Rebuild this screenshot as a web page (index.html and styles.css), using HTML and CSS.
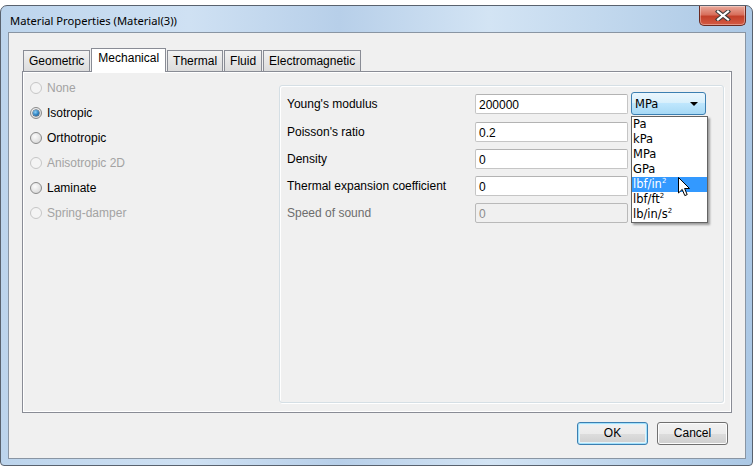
FILE: index.html
```html
<!DOCTYPE html>
<html>
<head>
  <link rel="stylesheet" href="styles.css">
</head>
<body>
<div class="window">
  <div class="titlebar">
    <span class="title">Material Properties (Material(3))</span>
    <div class="close-btn">
      <svg width="16" height="11" viewBox="0 0 16 11">
        <path d="M3 1.5 L13 9.5 M13 1.5 L3 9.5" stroke="#3b3b3b" stroke-width="4.2" stroke-linecap="square"/>
        <path d="M3 1.5 L13 9.5 M13 1.5 L3 9.5" stroke="#ffffff" stroke-width="2.2" stroke-linecap="square"/>
      </svg>
    </div>
  </div>

  <div class="client">
    <!-- tab strip -->
    <div class="tabs">
      <div class="tab">Geometric</div>
      <div class="tab selected">Mechanical</div>
      <div class="tab">Thermal</div>
      <div class="tab">Fluid</div>
      <div class="tab">Electromagnetic</div>
    </div>

    <div class="tab-panel">
      <div class="radio-list">
        <div class="radio disabled"><span class="circle"></span>None</div>
        <div class="radio checked"><span class="circle"></span>Isotropic</div>
        <div class="radio"><span class="circle"></span>Orthotropic</div>
        <div class="radio disabled"><span class="circle"></span>Anisotropic 2D</div>
        <div class="radio"><span class="circle"></span>Laminate</div>
        <div class="radio disabled"><span class="circle"></span>Spring-damper</div>
      </div>

      <div class="group-box">
        <div class="prop-grid">
          <div class="prop-label">Young's modulus</div>
          <div class="field">200000</div>
          <div class="combo-wrap">
            <div class="combo">MPa<span class="arrow"></span></div>
            <div class="combo-list">
              <div class="item">Pa</div>
              <div class="item">kPa</div>
              <div class="item">MPa</div>
              <div class="item">GPa</div>
              <div class="item active">lbf/in<sup>2</sup></div>
              <div class="item">lbf/ft<sup>2</sup></div>
              <div class="item">lb/in/s<sup>2</sup></div>
              <svg class="cursor" width="13" height="20" viewBox="0 0 13 20">
                <path d="M0.5 0.5 L0.5 16 L4.2 12.4 L6.8 18.6 L9.2 17.6 L6.6 11.5 L11.5 11.5 Z" fill="#fff" stroke="#000" stroke-width="1" stroke-linejoin="miter"/>
              </svg>
            </div>
          </div>

          <div class="prop-label">Poisson's ratio</div>
          <div class="field">0.2</div>
          <div></div>

          <div class="prop-label">Density</div>
          <div class="field">0</div>
          <div></div>

          <div class="prop-label">Thermal expansion coefficient</div>
          <div class="field">0</div>
          <div></div>

          <div class="prop-label disabled">Speed of sound</div>
          <div class="field disabled">0</div>
          <div></div>
        </div>
      </div>
    </div>

    <div class="buttons">
      <div class="btn default">OK</div>
      <div class="btn">Cancel</div>
    </div>
  </div>
</div>
</body>
</html>
```

FILE: styles.css
```css
/* reset */
* {
  margin: 0;
  padding: 0;
  box-sizing: border-box;
}

body {
  width: 756px;
  height: 467px;
  background: #ffffff;
  font-family: "Liberation Sans", Arial, sans-serif;
  font-size: 12px;
  color: #000;
  overflow: hidden;
}

/* Outer window frame (Aero glass look) */
.window {
  margin-top: 5px;
  width: 753px;
  height: 461px;
  border: 1px solid #59626e;
  border-radius: 7px 7px 4px 4px;
  background: linear-gradient(to right, #bcd4ec 0%, #cfe1f3 25%, #b7cfe9 45%, #d3e4f4 65%, #abc8e5 100%);
  padding: 0 6px 6px 7px;
  display: flex;
  flex-direction: column;
}

.titlebar {
  height: 26px;
  display: flex;
  align-items: flex-start;
}

.title {
  font-family: "Noto Sans", "Open Sans", sans-serif;
  font-size: 11.2px;
  padding: 7px 0 0 2px;
  color: #000;
}

.close-btn {
  margin-left: auto;
  width: 47px;
  height: 20px;
  border: 1px solid #6b2a20;
  border-top: none;
  border-radius: 0 0 5px 5px;
  background: linear-gradient(to bottom, #e9a99b 0%, #d8705d 45%, #c3402a 55%, #d45a43 100%);
  box-shadow: inset 0 0 0 1px rgba(255, 255, 255, 0.35);
  display: flex;
  align-items: center;
  justify-content: center;
}

/* Client area of the dialog */
.client {
  height: 427px;
  border: 1px solid #8995a3;
  background: #f0f0f0;
  padding: 15px 13px 13px 13px;
  display: flex;
  flex-direction: column;
}

/* Tabs */
.tabs {
  display: flex;
  align-items: flex-end;
  height: 23px;
  padding-left: 1px;
  position: relative;
  z-index: 1;
}

.tab {
  height: 21px;
  padding: 3px 5px 0 5px;
  border: 1px solid #898c95;
  border-bottom: none;
  background: linear-gradient(to bottom, #f2f2f2 0%, #e6e6e6 50%, #dcdcdc 100%);
  margin-right: 1px;
  white-space: nowrap;
}

.tab.selected {
  height: 24px;
  padding: 2px 6px 0 6px;
  background: #ffffff;
  margin-bottom: -1px;
}

.tab-panel {
  height: 342px;
  border: 1px solid #898c95;
  box-shadow: inset 0 0 0 1px #ffffff;
  display: flex;
  padding: 0 7px 0 2px;
}

/* Radio list on the left */
.radio-list {
  width: 254px;
  padding-top: 3px;
}

.radio {
  height: 25px;
  display: flex;
  align-items: center;
  padding-left: 5px;
}

.radio .circle {
  width: 12px;
  height: 12px;
  border-radius: 50%;
  border: 1px solid #8a8a8a;
  background: radial-gradient(circle at 40% 35%, #fbfbfb 0%, #e6e6e6 50%, #cfcfcf 100%);
  margin-right: 5px;
  position: relative;
}

.radio.checked .circle::after {
  content: "";
  position: absolute;
  left: 2px;
  top: 2px;
  width: 6px;
  height: 6px;
  border-radius: 50%;
  background: radial-gradient(circle at 40% 35%, #8fd2f8 0%, #2a7fc0 55%, #0b3f6e 100%);
  box-shadow: 0 0 0 0.5px #1d3a55;
}

.radio.disabled {
  color: #a3a3a3;
}

.radio.disabled .circle {
  border-color: #c6c6c6;
  background: #f4f4f4;
}

/* Group box with the properties */
.group-box {
  flex: 1;
  margin: 13px 0 9px 0;
  border: 1px solid #d5dfe5;
  border-radius: 3px;
  box-shadow: inset 1px 1px 0 #ffffff, 1px 1px 0 #ffffff;
  padding: 6px 0 0 7px;
}

.prop-grid {
  display: grid;
  grid-template-columns: 188px 153px 78px;
  grid-template-rows: 23px;
  grid-auto-rows: 20px;
  row-gap: 7px;
  align-items: center;
}

.prop-label.disabled {
  color: #6d6d6d;
}

.field {
  height: 20px;
  background: #fff;
  border: 1px solid #c5c5c5;
  border-top-color: #b3b3b3;
  border-radius: 2px;
  padding: 3px 0 0 3px;
}

.field.disabled {
  background: #f0f0f0;
  border-color: #b9b9b9;
  color: #8c8c8c;
}

/* Unit combo box with its open list */
.combo-wrap {
  position: relative;
  height: 23px;
  padding-left: 3px;
}

.combo {
  width: 75px;
  height: 23px;
  border: 1px solid #3c7fb1;
  border-radius: 3px;
  background: linear-gradient(to bottom, #eaf6fd 0%, #d9f0fc 45%, #bee6fd 50%, #a7d9f5 100%);
  font-family: "DejaVu Sans", sans-serif;
  font-size: 11.5px;
  padding: 4px 0 0 3px;
  position: relative;
}

.combo .arrow {
  position: absolute;
  right: 7px;
  top: 9px;
  width: 0;
  height: 0;
  border-left: 4px solid transparent;
  border-right: 4px solid transparent;
  border-top: 4px solid #000;
}

.combo-list {
  position: absolute;
  left: 3px;
  top: 24px;
  width: 77px;
  background: #fff;
  border: 1px solid #646464;
  box-shadow: 2px 2px 2px rgba(0, 0, 0, 0.35);
  font-family: "DejaVu Sans", sans-serif;
  font-size: 11.5px;
  z-index: 5;
}

.combo-list .item {
  height: 15px;
  line-height: 15px;
  padding-left: 1px;
}

.combo-list .item.active {
  background: #3399ff;
  color: #fff;
}

.combo-list sup {
  font-size: 7px;
  vertical-align: 5px;
  line-height: 0;
}

.cursor {
  position: absolute;
  left: 46px;
  top: 60px;
}

/* OK / Cancel */
.buttons {
  display: flex;
  justify-content: flex-end;
  gap: 9px;
  margin-top: 9px;
  padding-right: 4px;
}

.btn {
  width: 71px;
  height: 23px;
  border: 1px solid #707070;
  border-radius: 3px;
  background: linear-gradient(to bottom, #f2f2f2 0%, #ebebeb 50%, #dddddd 51%, #cfcfcf 100%);
  box-shadow: inset 0 0 0 1px #fcfcfc;
  text-align: center;
  line-height: 21px;
}

.btn.default {
  border-color: #3c7fb1;
  box-shadow: inset 0 0 0 1px #a3e1fb, inset 0 0 0 2px #e2f3fb;
}
```
